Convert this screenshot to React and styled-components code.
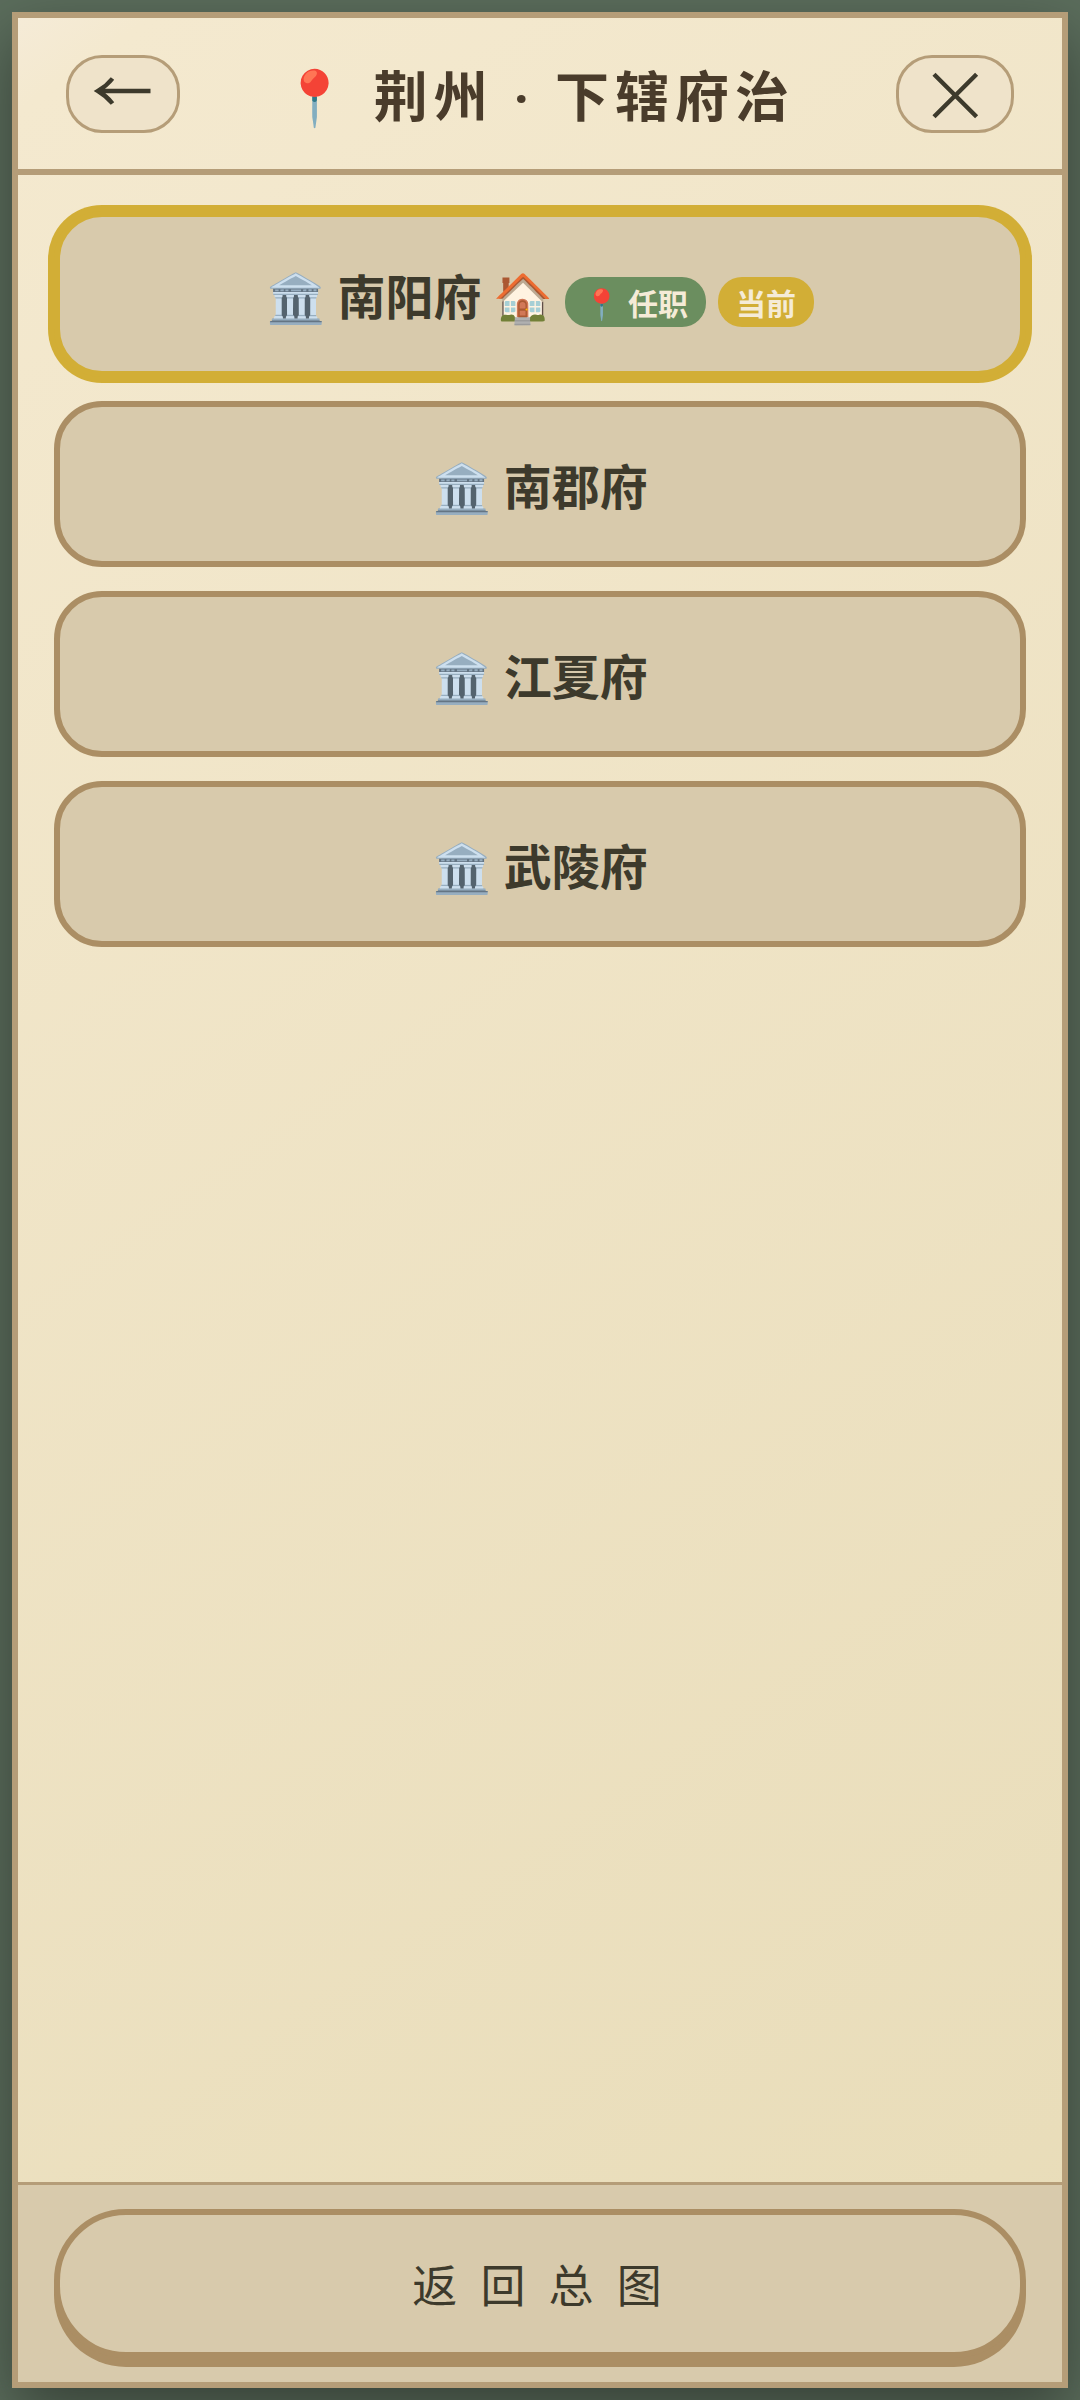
import React from "react";
import styled, { createGlobalStyle } from "styled-components";

const ink = "#3d3a2c";
const tan = "#b59d78";
const bronze = "#ab8e64";
const sand = "#d8caac";
const gold = "#d2ae36";

const GlobalStyle = createGlobalStyle`
  *, *::before, *::after { box-sizing: border-box; }
  body {
    margin: 0;
    font-family: Roboto, "Noto Sans CJK SC", "Noto Color Emoji", sans-serif;
    color: ${ink};
  }
`;

const Backdrop = styled.div`
  display: flex;
  min-height: 100vh;
  padding: 12px;
  background: #5b6d5c;
`;

const Panel = styled.main`
  flex: 1;
  min-width: 0;
  display: flex;
  flex-direction: column;
  border: 6px solid ${tan};
  background: linear-gradient(145deg, #f5ebd7 0%, #f4e9cf 3%, #e8dcb8 100%);
  box-shadow: 0 24px 60px rgba(0, 0, 0, 0.4);
`;

const Header = styled.header`
  display: flex;
  align-items: center;
  justify-content: space-between;
  padding: 36px 48px;
  border-bottom: 6px solid ${tan};
`;

const Title = styled.h1`
  margin: 0;
  font-size: 54px;
  font-weight: 700;
  letter-spacing: 6px;
  color: #4a3c2b;
`;

const IconButton = styled.button`
  padding: 0 24px;
  border: 3px solid ${tan};
  border-radius: 36px;
  background: #efe3ca;
  color: ${ink};
  cursor: pointer;

  svg {
    display: block;
    fill: none;
    stroke: currentColor;
    stroke-width: 4.4;
  }
`;

const List = styled.ul`
  flex: 1;
  display: flex;
  flex-direction: column;
  gap: 24px;
  margin: 0;
  padding: 36px;
  list-style: none;
`;

const Prefecture = styled.button`
  display: block;
  width: 100%;
  padding: 42px 36px;
  border: 6px solid ${(p) => (p.$current ? gold : bronze)};
  border-radius: 48px;
  background: ${sand};
  box-shadow: ${(p) => (p.$current ? `0 0 0 6px ${gold}` : "none")};
  color: ${ink};
  font-family: inherit;
  font-size: 48px;
  font-weight: 700;
  cursor: pointer;
`;

const Badge = styled.span`
  display: inline-block;
  margin-left: 12px;
  padding: 3px 18px;
  border-radius: 24px;
  background: ${(p) => p.$color};
  color: #f5ebd7;
  font-size: 30px;
`;

const Footer = styled.footer`
  padding: 24px 36px;
  border-top: 3px solid ${tan};
  background: ${sand};
`;

const ReturnButton = styled.button`
  display: block;
  width: 100%;
  padding: 36px;
  border: 6px solid ${bronze};
  border-radius: 72px;
  background: ${sand};
  box-shadow: 0 9px 0 ${bronze};
  color: ${ink};
  font-family: inherit;
  font-size: 45px;
  letter-spacing: 6px;
  cursor: pointer;
`;

const BackIcon = () => (
  <svg width="60" height="72" viewBox="0 0 60 72" aria-hidden="true">
    <path d="M57.5 33H5M19.5 20.5Q13.5 28 5 33Q13.5 38 19.5 45.5" />
  </svg>
);

const CloseIcon = () => (
  <svg width="64" height="72" viewBox="0 0 64 72" aria-hidden="true">
    <path d="M11 16.2L53.6 58.8M53.6 16.2L11 58.8" />
  </svg>
);

const prefectures = [
  { name: "南阳府", home: true, post: true, current: true },
  { name: "南郡府" },
  { name: "江夏府" },
  { name: "武陵府" },
];

export default function App() {
  return (
    <>
      <GlobalStyle />
      <Backdrop>
        <Panel>
          <Header>
            <IconButton type="button" aria-label="返回">
              <BackIcon />
            </IconButton>
            <Title>📍 荆州 · 下辖府治</Title>
            <IconButton type="button" aria-label="关闭">
              <CloseIcon />
            </IconButton>
          </Header>
          <List>
            {prefectures.map((p) => (
              <li key={p.name}>
                <Prefecture type="button" $current={p.current}>
                  🏛️ {p.name}
                  {p.home && " 🏠"}
                  {p.post && <Badge $color="#6b8e5f">📍 任职</Badge>}
                  {p.current && <Badge $color={gold}>当前</Badge>}
                </Prefecture>
              </li>
            ))}
          </List>
          <Footer>
            <ReturnButton type="button">返 回 总 图</ReturnButton>
          </Footer>
        </Panel>
      </Backdrop>
    </>
  );
}
